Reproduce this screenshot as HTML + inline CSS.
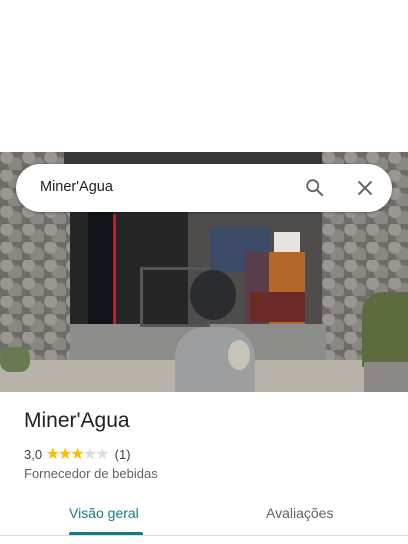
<!DOCTYPE html>
<html><head><style>
body{margin:0;width:408px;height:544px;background:#fff;font-family:"Liberation Sans",Arial,sans-serif;position:relative;overflow:hidden}
.ph{position:absolute;left:0;top:152px;width:408px;height:240px;background:#6e6c68;overflow:hidden}
.ph div{position:absolute}
.sb{position:absolute;left:16px;top:164px;width:376px;height:48px;background:#fff;border-radius:24px;box-shadow:0 1px 3px rgba(0,0,0,.3)}
.st{background:radial-gradient(circle at 30% 30%,#9a9792 0 6px,transparent 7px),radial-gradient(circle at 70% 70%,#8a8782 0 7px,transparent 8px),#6f6c68;background-size:22px 18px}
</style></head><body>
<div class="ph">
 <div class="st" style="left:0;top:0;width:72px;height:215px"></div>
 <div class="st" style="left:322px;top:0;width:86px;height:210px"></div>
 <div style="left:64px;top:0;width:258px;height:60px;background:#3a3836"></div>
 <div style="left:70px;top:60px;width:118px;height:150px;background:#262626"></div>
 <div style="left:188px;top:60px;width:134px;height:150px;background:#4e4d4b"></div>
 <div style="left:88px;top:60px;width:26px;height:135px;background:#101418"></div>
 <div style="left:113px;top:62px;width:3px;height:110px;background:#b3262a"></div>
 <div style="left:210px;top:75px;width:60px;height:45px;background:#3c4c68"></div>
 <div style="left:245px;top:100px;width:60px;height:72px;background:linear-gradient(90deg,#5a3d4a 0 40%,#b5672a 40%)"></div>
 <div style="left:250px;top:140px;width:55px;height:30px;background:#6b2a24"></div>
 <div style="left:274px;top:80px;width:26px;height:20px;background:#e8e3e0"></div>
 <div style="left:70px;top:172px;width:256px;height:40px;background:#8c8c8a"></div>
 <div style="left:0;top:208px;width:408px;height:32px;background:#b8b2a8"></div>
 <div style="left:140px;top:115px;width:70px;height:60px;border:3px solid #555;box-sizing:border-box"></div>
 <div style="left:190px;top:118px;width:46px;height:50px;border-radius:50%;background:#2b2c30"></div>
 <div style="left:175px;top:175px;width:80px;height:65px;border-radius:30px 30px 0 0;background:#9c9ea0"></div>
 <div style="left:228px;top:188px;width:22px;height:30px;border-radius:50%;background:#c8c3b8"></div>
 <div style="left:362px;top:140px;width:46px;height:75px;background:#5c6c3e;border-radius:20px 0 0 0"></div>
 <div style="left:364px;top:210px;width:44px;height:30px;background:#8a8986"></div>
 <div style="left:0;top:195px;width:30px;height:25px;background:#6a7a50;border-radius:10px"></div>
</div>
<div class="sb">
 <div style="position:absolute;left:24px;top:15px;font-size:14.5px;color:#202124">Miner'Agua</div>
 <svg style="position:absolute;left:288px;top:13px" width="22" height="22" viewBox="0 0 24 24"><circle cx="9.5" cy="9.5" r="6" fill="none" stroke="#5f6368" stroke-width="2"/><path d="M14 14l6.5 6.5" stroke="#5f6368" stroke-width="2.2"/></svg>
 <svg style="position:absolute;left:338px;top:13px" width="22" height="22" viewBox="0 0 24 24"><path d="M5 5l14 14M19 5L5 19" stroke="#5f6368" stroke-width="2.2"/></svg>
</div>
<div style="position:absolute;left:24px;top:409px;font-size:21px;color:#202124">Miner'Agua</div>
<div style="position:absolute;left:24px;top:444px;font-size:13px;color:#3c4043;white-space:nowrap">3,0 <span style="color:#fbbc04;font-size:16px;letter-spacing:-2px">★★★</span><span style="color:#dadce0;font-size:16px;letter-spacing:-2px">★★</span>&nbsp; (1)</div>
<div style="position:absolute;left:24px;top:466px;font-size:13px;color:#5f6368">Fornecedor de bebidas</div>
<div style="position:absolute;left:69px;top:505px;font-size:14px;color:#137c83">Visão geral</div>
<div style="position:absolute;left:266px;top:505px;font-size:14px;color:#5f6368">Avaliações</div>
<div style="position:absolute;left:69px;top:532px;width:74px;height:3px;background:#137c83;border-radius:2px 2px 0 0"></div>
<div style="position:absolute;left:0;top:535px;width:408px;height:1px;background:#dadce0"></div>
</body></html>
